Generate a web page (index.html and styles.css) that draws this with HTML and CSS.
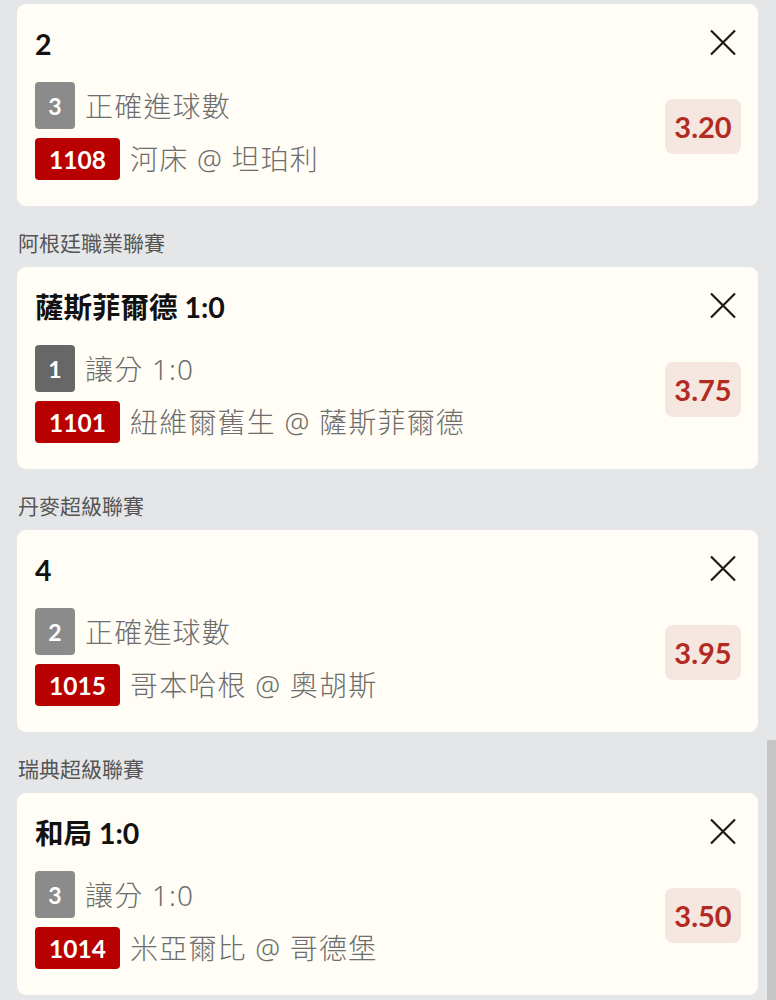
FILE: index.html
```html
<!DOCTYPE html>
<html lang="zh-Hant">
<head>
<meta charset="utf-8">
<link rel="stylesheet" href="styles.css">
</head>
<body>
<div class="list">
  <div class="card">
    <div class="title-row">
      <div class="title">2</div>
      <svg class="close" viewBox="0 0 26 26"><path d="M1 1L25 25M25 1L1 25"/></svg>
    </div>
    <div class="body">
      <div class="lines">
        <div class="line"><span class="badge gray">3</span><span class="txt">正確進球數</span></div>
        <div class="line"><span class="badge red">1108</span><span class="txt">河床 @ 坦珀利</span></div>
      </div>
      <div class="odds">3.20</div>
    </div>
  </div>

  <div class="league">阿根廷職業聯賽</div>
  <div class="card">
    <div class="title-row">
      <div class="title">薩斯菲爾德 1:0</div>
      <svg class="close" viewBox="0 0 26 26"><path d="M1 1L25 25M25 1L1 25"/></svg>
    </div>
    <div class="body">
      <div class="lines">
        <div class="line"><span class="badge dark">1</span><span class="txt">讓分 1:0</span></div>
        <div class="line"><span class="badge red">1101</span><span class="txt">紐維爾舊生 @ 薩斯菲爾德</span></div>
      </div>
      <div class="odds">3.75</div>
    </div>
  </div>

  <div class="league">丹麥超級聯賽</div>
  <div class="card">
    <div class="title-row">
      <div class="title">4</div>
      <svg class="close" viewBox="0 0 26 26"><path d="M1 1L25 25M25 1L1 25"/></svg>
    </div>
    <div class="body">
      <div class="lines">
        <div class="line"><span class="badge gray">2</span><span class="txt">正確進球數</span></div>
        <div class="line"><span class="badge red">1015</span><span class="txt">哥本哈根 @ 奧胡斯</span></div>
      </div>
      <div class="odds">3.95</div>
    </div>
  </div>

  <div class="league">瑞典超級聯賽</div>
  <div class="card">
    <div class="title-row">
      <div class="title">和局 1:0</div>
      <svg class="close" viewBox="0 0 26 26"><path d="M1 1L25 25M25 1L1 25"/></svg>
    </div>
    <div class="body">
      <div class="lines">
        <div class="line"><span class="badge gray">3</span><span class="txt">讓分 1:0</span></div>
        <div class="line"><span class="badge red">1014</span><span class="txt">米亞爾比 @ 哥德堡</span></div>
      </div>
      <div class="odds">3.50</div>
    </div>
  </div>
</div>
<div class="scrollbar"></div>
</body>
</html>
```

FILE: styles.css
```css
html, body {
  margin: 0;
  padding: 0;
  background: #e5e6e8;
}
body {
  font-family: Lato, "Noto Sans CJK TC", sans-serif;
  width: 776px;
  height: 1000px;
  overflow: hidden;
  position: relative;
}
.list {
  padding: 4px 18px 0 17px;
  display: flex;
  flex-direction: column;
}
.card {
  background: #fffdf5;
  border-radius: 9px;
  padding: 23px 17px 26px 18px;
  display: flex;
  flex-direction: column;
}
.title-row {
  display: flex;
  justify-content: space-between;
  align-items: center;
  height: 34px;
  padding-right: 5px;
}
.title {
  font-size: 28.5px;
  font-weight: 700;
  color: #111;
  line-height: 34px;
}
.close {
  width: 26px;
  height: 27px;
  stroke: #1a1a1a;
  stroke-width: 2.2;
  fill: none;
  margin-top: -3px;
}
.body {
  margin-top: 21px;
  display: flex;
  justify-content: space-between;
  align-items: center;
}
.lines {
  display: flex;
  flex-direction: column;
  gap: 9px;
}
.line {
  display: flex;
  align-items: center;
  gap: 10px;
}
.badge {
  display: flex;
  align-items: center;
  justify-content: center;
  color: #fff;
  font-weight: 700;
  border-radius: 4px;
}
.gray, .dark {
  width: 40px;
  height: 47px;
  font-size: 23px;
}
.gray { background: #8b8b8b; }
.dark { background: #676767; }
.red {
  background: #b80000;
  height: 42px;
  width: 85px;
  font-size: 24.5px;
}
.txt {
  font-family: "Noto Sans", "Noto Sans CJK TC", sans-serif;
  font-weight: 300;
  font-size: 28px;
  letter-spacing: 1.2px;
  color: #6d6d6d;
  line-height: 40px;
}
.odds {
  width: 76px;
  height: 55px;
  box-sizing: border-box;
  background: #f6e6e0;
  border-radius: 8px;
  color: #b22b22;
  font-size: 29px;
  font-weight: 700;
  display: flex;
  align-items: center;
  justify-content: center;
  margin-bottom: 9px;
}
.league {
  font-size: 21px;
  color: #555;
  line-height: 30px;
  padding: 21px 0 10px 1px;
  font-family: "Noto Sans CJK TC", sans-serif;
}
.scrollbar {
  position: absolute;
  left: 767px;
  top: 740px;
  width: 9px;
  height: 260px;
  background: #c6c6c6;
}
```
